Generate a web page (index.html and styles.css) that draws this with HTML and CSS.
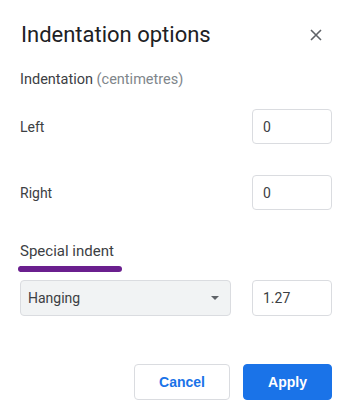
FILE: index.html
```html
<!DOCTYPE html>
<html lang="en">
<head>
  <meta charset="UTF-8">
  <meta name="viewport" content="width=device-width, initial-scale=1.0">
  <title>Indentation options</title>
  <link rel="stylesheet" href="styles.css">
</head>
<body>
  <div class="dialog">
    <div class="dialog-header">
      <h1 class="dialog-title">Indentation options</h1>
      <button class="close-btn" aria-label="Close">
        <svg width="12" height="12" viewBox="0 0 12 12">
          <path d="M1 1 L11 11 M11 1 L1 11" stroke="#5f6368" stroke-width="1.6" fill="none"/>
        </svg>
      </button>
    </div>

    <div class="section-title">Indentation <span class="unit">(centimetres)</span></div>

    <div class="field-row first">
      <label class="field-label">Left</label>
      <input class="num-input" type="text" value="0">
    </div>

    <div class="field-row">
      <label class="field-label">Right</label>
      <input class="num-input" type="text" value="0">
    </div>

    <div class="special-title">Special indent</div>
    <div class="highlight"></div>

    <div class="special-row">
      <div class="select">
        <span>Hanging</span>
        <span class="caret"></span>
      </div>
      <input class="num-input tall" type="text" value="1.27">
    </div>

    <div class="actions">
      <button class="btn btn-cancel">Cancel</button>
      <button class="btn btn-apply">Apply</button>
    </div>
  </div>
</body>
</html>
```

FILE: styles.css
```css
body {
  margin: 0;
  background: #fff;
  font-family: Roboto, 'Liberation Sans', Arial, sans-serif;
  color: #3c4043;
}
.dialog {
  width: 354px;
  box-sizing: border-box;
  padding: 21px 22px 0 20px;
}
.dialog-header {
  display: flex;
  align-items: center;
  justify-content: space-between;
}
.dialog-title {
  margin: 0 0 0 1px;
  font-family: Roboto, sans-serif;
  font-weight: 400;
  font-size: 22px;
  line-height: 28px;
  color: #202124;
}
.close-btn {
  border: none;
  background: none;
  padding: 0;
  margin-right: 10px;
  width: 12px;
  height: 12px;
  display: flex;
  cursor: pointer;
}
.section-title {
  margin-top: 21px;
  font-size: 14.5px;
  line-height: 20px;
  color: #3c4043;
}
.unit {
  color: #80868b;
}
.field-row {
  display: flex;
  align-items: center;
  justify-content: space-between;
  margin-top: 31px;
}
.field-row.first {
  margin-top: 19px;
}
.field-label {
  font-size: 14px;
}
.num-input {
  width: 80px;
  height: 35px;
  box-sizing: border-box;
  border: 1px solid #dadce0;
  border-radius: 4px;
  padding: 0 10px;
  font-family: Roboto, sans-serif;
  font-size: 14px;
  color: #3c4043;
  outline: none;
}
.num-input.tall {
  height: 36px;
}
.special-title {
  margin-top: 31px;
  font-size: 15px;
  line-height: 20px;
  color: #3c4043;
}
.highlight {
  width: 104px;
  height: 6px;
  margin: 5px 0 0 -2px;
  border-radius: 3px;
  background: #6a1f8e;
}
.special-row {
  display: flex;
  justify-content: space-between;
  margin-top: 8px;
}
.select {
  width: 211px;
  height: 36px;
  box-sizing: border-box;
  border: 1px solid #dadce0;
  border-radius: 4px;
  background: #f1f3f4;
  display: flex;
  align-items: center;
  justify-content: space-between;
  padding: 0 11px 0 7px;
  font-size: 14px;
  color: #3c4043;
}
.caret {
  width: 0;
  height: 0;
  border-left: 4px solid transparent;
  border-right: 4px solid transparent;
  border-top: 4px solid #5f6368;
}
.actions {
  display: flex;
  justify-content: flex-end;
  gap: 13px;
  margin-top: 48px;
}
.btn {
  height: 36px;
  border-radius: 4px;
  font-family: 'Liberation Sans', Arial, sans-serif;
  font-weight: 700;
  font-size: 14px;
  cursor: pointer;
}
.btn-cancel {
  width: 96px;
  background: #fff;
  border: 1px solid #dadce0;
  color: #1a73e8;
}
.btn-apply {
  width: 89px;
  background: #1a73e8;
  border: 1px solid #1a73e8;
  color: #fff;
}
```
